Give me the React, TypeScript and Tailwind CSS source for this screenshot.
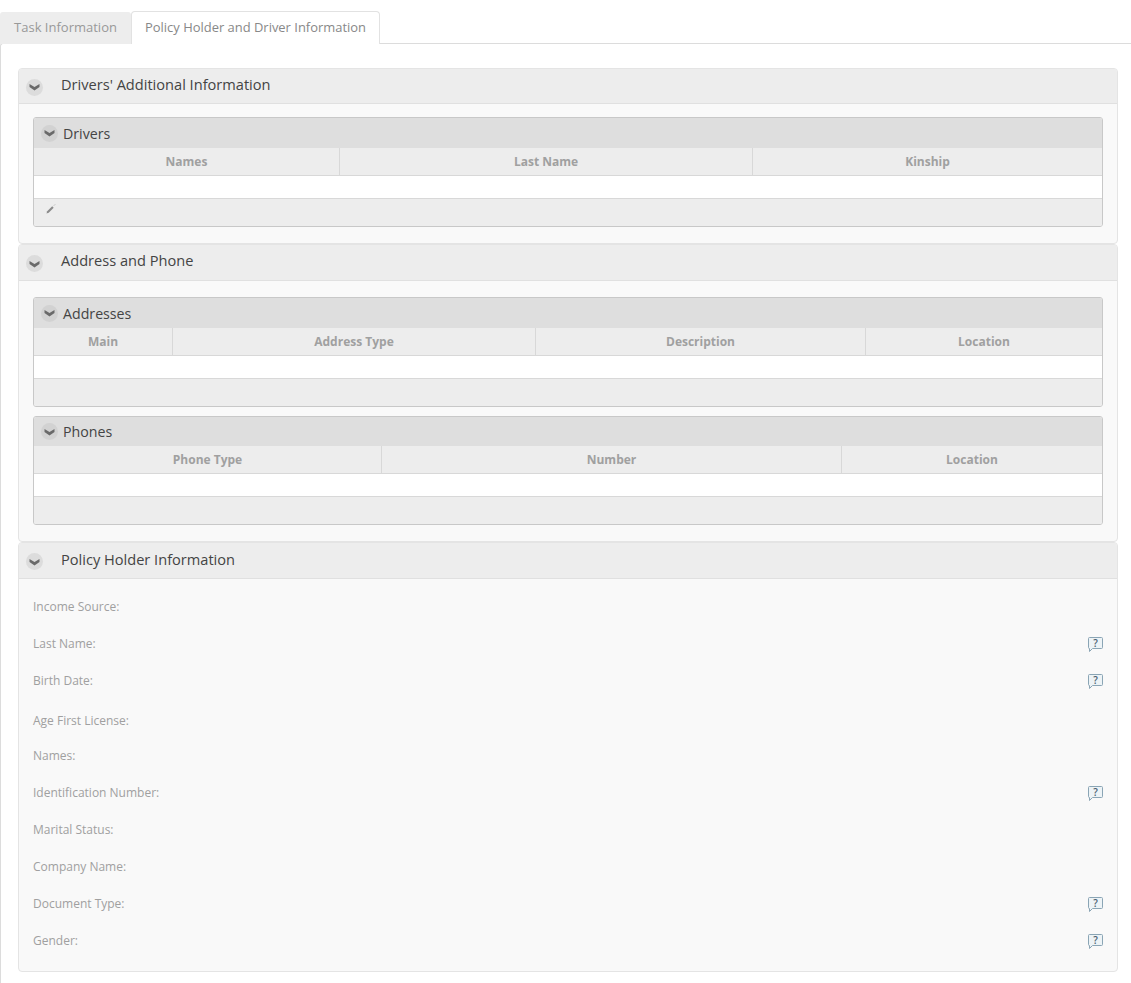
const font = "font-['Open_Sans',sans-serif]";

const Toggle = ({ size }: { size: "lg" | "sm" }) => (
  <span
    className={
      size === "lg"
        ? "mt-[2px] flex h-[17px] w-[17px] items-center justify-center rounded-full bg-[#dcdcdc]"
        : "flex h-[17px] w-[17px] items-center justify-center rounded-full bg-[#d2d2d2]"
    }
  >
    <svg width="11" height="8" viewBox="0 0 11 8">
      <path d="M0.5 1l5 3 5-3v3l-5 3.5-5-3.5z" fill="#6a6a6a" />
    </svg>
  </span>
);

const HelpIcon = () => (
  <svg width="15" height="16" viewBox="0 0 15 16" className="mt-[2px] shrink-0">
    <path
      d="M1.5 0.5h12a1 1 0 0 1 1 1v9a1 1 0 0 1-1 1H4.5l-3 3v-3a1 1 0 0 1-1-1v-9a1 1 0 0 1 1-1z"
      fill="#edf3f6"
      stroke="#8aa5b5"
    />
    <text x="7.5" y="9.5" textAnchor="middle" fontSize="10" fontWeight="600" fill="#4a6070" fontFamily="Open Sans">
      ?
    </text>
  </svg>
);

const PanelHeader = ({ title, h, textCls }: { title: string; h: string; textCls: string }) => (
  <div className={`flex items-center border-b border-[#e0e0e0] bg-[#ededed] pl-[7px] ${h}`}>
    <Toggle size="lg" />
    <span className={`ml-[18px] text-[14.6px] text-[#444] ${textCls}`}>{title}</span>
  </div>
);

const Grid = ({
  title,
  columns,
  edit,
  captionH = "h-[30px]",
}: {
  title: string;
  columns: { name: string; w: string }[];
  edit?: boolean;
  captionH?: string;
}) => (
  <div className="overflow-hidden rounded-[3px] border border-[#c8c8c8]">
    <div className={`flex items-center bg-[#dedede] pl-[7px] ${captionH}`}>
      <Toggle size="sm" />
      <span className="mt-px ml-[5px] text-[14.2px] text-[#444]">{title}</span>
    </div>
    <div className="flex h-[28px] border-b border-[#d8d8d8] bg-[#ededed]">
      {columns.map((c, i) => (
        <div
          key={c.name}
          className={`flex items-center justify-center text-[12px] font-bold text-[#a0a0a0] ${c.w} ${
            i < columns.length - 1 ? "border-r border-[#d8d8d8]" : ""
          }`}
        >
          {c.name}
        </div>
      ))}
    </div>
    <div className="h-[22px] bg-white" />
    <div className="flex h-[28px] items-start border-t border-[#d8d8d8] bg-[#ededed] pt-[4px] pl-[11px]">
      {edit && (
        <svg width="12" height="12" viewBox="0 0 12 12">
          <path d="M1.5 10.5l.7-2.2 5-5 1.5 1.5-5 5z" fill="#8a8a8a" />
          <path d="M9 2.5l1-1" stroke="#aaa" />
        </svg>
      )}
    </div>
  </div>
);

const fields = [
  { label: "Income Source:" },
  { label: "Last Name:", help: true },
  { label: "Birth Date:", help: true },
  { label: "Age First License:", cls: "mt-[3px]" },
  { label: "Names:", cls: "-mt-[2px]" },
  { label: "Identification Number:", help: true },
  { label: "Marital Status:" },
  { label: "Company Name:" },
  { label: "Document Type:", help: true },
  { label: "Gender:", help: true },
];

export default function App() {
  return (
    <div className={`h-[983px] w-[1131px] overflow-hidden bg-white pt-[11px] ${font}`}>
      <div className="relative z-10 flex h-[33px]">
        <div className="mt-px flex h-[32px] w-[131px] items-center justify-center rounded-t-[3px] bg-[#ededed] text-[13px] text-[#999]">
          Task Information
        </div>
        <div className="flex h-[33px] w-[249px] items-center justify-center rounded-t-[4px] border border-b-0 border-[#e2e2e2] bg-white text-[12.95px] text-[#888]">
          Policy Holder and Driver Information
        </div>
      </div>
      <div className="-mt-px h-[940px] rounded-tl-[3px] border-t border-l border-[#dcdcdc] pt-[24px] pr-[13px] pl-[17px]">
        <div className="overflow-hidden rounded-[4px] border border-[#e4e4e4] bg-[#f9f9f9]">
          <PanelHeader title="Drivers' Additional Information" h="h-[35px]" textCls="mb-[3px]" />
          <div className="px-[14px] pt-[13px] pb-[16px]">
            <Grid
              title="Drivers"
              edit
              columns={[
                { name: "Names", w: "w-[306px]" },
                { name: "Last Name", w: "w-[413px]" },
                { name: "Kinship", w: "flex-1" },
              ]}
            />
          </div>
        </div>
        <div className="overflow-hidden rounded-[4px] border border-[#e4e4e4] bg-[#f9f9f9]">
          <PanelHeader title="Address and Phone" h="h-[36px]" textCls="mb-[3px]" />
          <div className="flex flex-col gap-[9px] px-[14px] pt-[16px] pb-[16px]">
            <Grid
              title="Addresses"
              columns={[
                { name: "Main", w: "w-[139px]" },
                { name: "Address Type", w: "w-[363px]" },
                { name: "Description", w: "w-[330px]" },
                { name: "Location", w: "flex-1" },
              ]}
            />
            <Grid
              title="Phones"
              captionH="h-[29px]"
              columns={[
                { name: "Phone Type", w: "w-[348px]" },
                { name: "Number", w: "w-[460px]" },
                { name: "Location", w: "flex-1" },
              ]}
            />
          </div>
        </div>
        <div className="overflow-hidden rounded-[4px] border border-[#e4e4e4] bg-[#f9f9f9]">
          <PanelHeader title="Policy Holder Information" h="h-[36px]" textCls="mb-[1px]" />
          <div className="px-[14px] pt-[9px] pb-[12px]">
            {fields.map((f) => (
              <div key={f.label} className={`flex h-[37px] items-center justify-between ${f.cls ?? ""}`}>
                <span className="text-[12px] text-[#a0a0a0]">{f.label}</span>
                {f.help && <HelpIcon />}
              </div>
            ))}
          </div>
        </div>
      </div>
    </div>
  );
}
